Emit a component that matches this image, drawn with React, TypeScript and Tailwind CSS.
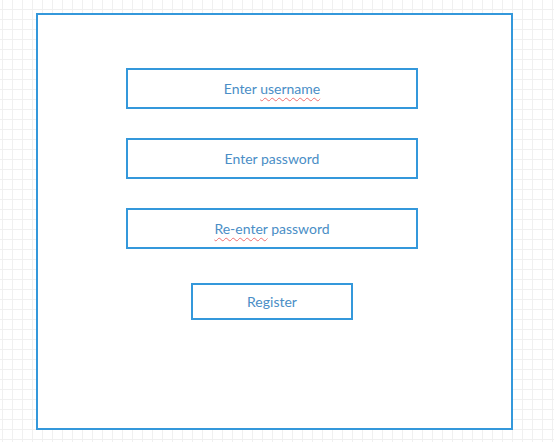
const fields = [
  { label: 'Enter', squiggle: 'username', after: '' },
  { label: 'Enter password', squiggle: '', after: '' },
  { label: '', squiggle: 'Re-enter', after: ' password' },
]

function Field({ label, squiggle, after }: { label: string; squiggle: string; after: string }) {
  return (
    <div className="flex h-[41px] w-[292px] items-center justify-center border-2 border-[#3498db] bg-white text-[14px] text-[#4a8ec6]">
      <span>
        {label}
        {label && squiggle ? ' ' : ''}
        {squiggle && (
          <span className="underline decoration-[#f07070] decoration-wavy decoration-1 underline-offset-[3px]">{squiggle}</span>
        )}
        {after}
      </span>
    </div>
  )
}

export default function App() {
  return (
    <div
      className="h-[442px] w-[554px] overflow-hidden bg-white bg-[linear-gradient(to_right,#f0f0f0_1px,transparent_1px),linear-gradient(to_bottom,#f0f0f0_1px,transparent_1px)] bg-[size:10px_10px] bg-[position:2px_9px] pt-[13px] pl-[36px]"
      style={{ fontFamily: 'Lato, "Open Sans", sans-serif' }}
    >
      <div className="flex h-[417px] w-[477px] flex-col border-2 border-[#3498db] bg-white pt-[53px] pl-[88px]">
        <div className="flex flex-col gap-[29px]">
          {fields.map((f, i) => (
            <Field key={i} {...f} />
          ))}
        </div>
        <button
          type="button"
          className="mt-[34px] ml-[65px] flex h-[37px] w-[162px] items-center justify-center border-2 border-[#3498db] bg-white text-[14px] text-[#4a8ec6]"
        >
          Register
        </button>
      </div>
    </div>
  )
}
